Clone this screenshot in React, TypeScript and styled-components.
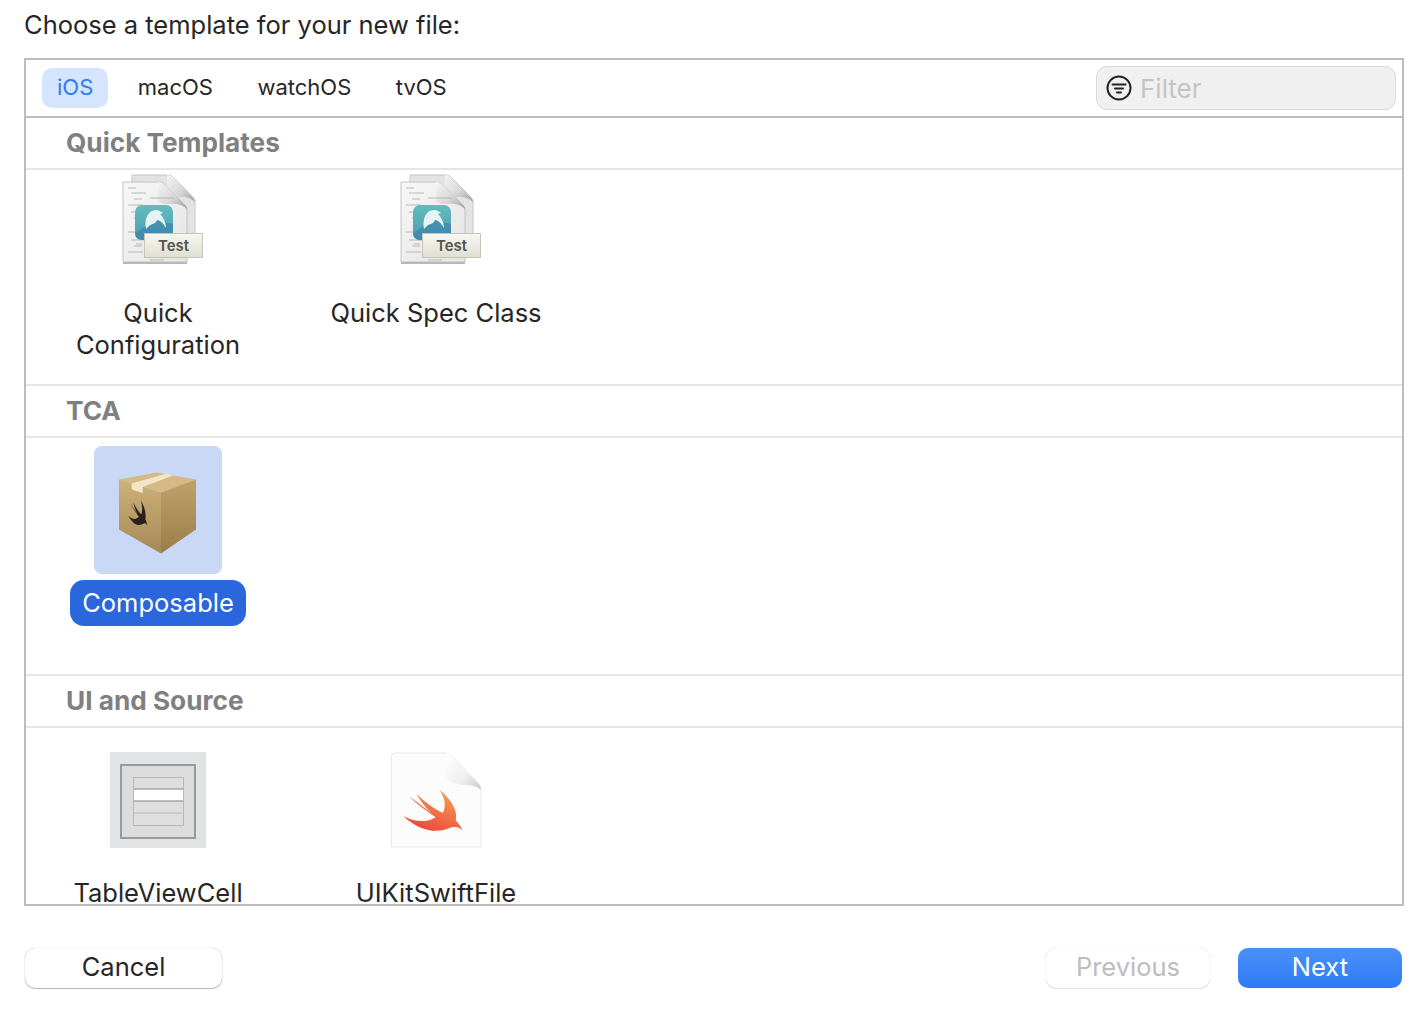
import React from "react";
import styled, { createGlobalStyle } from "styled-components";

const GlobalStyle = createGlobalStyle`
  html, body {
    margin: 0;
    background: #fff;
    font-family: Inter, "Liberation Sans", sans-serif;
    color: #262626;
  }
  * { box-sizing: border-box; }
`;

const Page = styled.div`
  width: 1422px;
  height: 1010px;
  padding: 0 18px 0 24px;
  overflow: hidden;
`;

const Title = styled.div`
  height: 58px;
  padding-top: 8px;
  font-size: 25.5px;
  line-height: 34px;
`;

const Panel = styled.div`
  height: 848px;
  border: 2px solid #bcbcbc;
  overflow: hidden;
`;

const Toolbar = styled.div`
  height: 58px;
  border-bottom: 2px solid #bcbcbc;
  display: flex;
  align-items: flex-start;
  padding: 8px 6px 0 16px;
  gap: 14.5px;
`;

const Tab = styled.div<{ $active?: boolean }>`
  height: 40px;
  padding: 0 15px;
  border-radius: 10px;
  font-size: 22px;
  line-height: 39px;
  background: ${(p) => (p.$active ? "#d4e5fd" : "transparent")};
  color: ${(p) => (p.$active ? "#2e7bf6" : "#262626")};
`;

const Filter = styled.div`
  margin-left: auto;
  margin-top: -2px;
  width: 300px;
  height: 44px;
  border: 1.5px solid #d9d9d9;
  border-radius: 11px;
  background: #f0f0f0;
  display: flex;
  align-items: center;
  gap: 8px;
  padding-left: 9px;
  font-size: 26px;
  color: #c4c4c4;
`;

const SectionHeader = styled.div`
  height: 52px;
  border-bottom: 2px solid #e6e6e6;
  padding-left: 40px;
  font-size: 26.2px;
  font-weight: 700;
  line-height: 50px;
  color: #808080;
`;

const Row = styled.div<{ $height: number; $compact?: boolean }>`
  height: ${(p) => p.$height}px;
  border-bottom: 2px solid #e6e6e6;
  display: grid;
  grid-template-columns: 220px 220px;
  column-gap: 58px;
  align-items: start;
  padding: ${(p) => (p.$compact ? "0" : "8px")} 0 0 22px;
  &:last-child { border-bottom: none; }
`;

const Cell = styled.div`
  display: flex;
  flex-direction: column;
  align-items: center;
`;

const IconSlot = styled.div<{ $compact?: boolean; $selected?: boolean }>`
  width: 128px;
  height: ${(p) => (p.$compact ? 100 : 128)}px;
  display: flex;
  align-items: center;
  justify-content: center;
  border-radius: 8px;
  background: ${(p) => (p.$selected ? "#c9d8f5" : "transparent")};
`;

const Label = styled.div<{ $compact?: boolean; $selected?: boolean }>`
  margin-top: ${(p) => (p.$compact ? 20 : 6)}px;
  padding: 7px 12px;
  border-radius: 14px;
  font-size: 25.5px;
  line-height: 32px;
  text-align: center;
  white-space: nowrap;
  background: ${(p) => (p.$selected ? "#2a67dc" : "transparent")};
  color: ${(p) => (p.$selected ? "#fff" : "#262626")};
`;

const Footer = styled.div`
  margin-top: 42px;
  display: flex;
  padding: 0 2px 0 1px;
`;

const Button = styled.div<{ $width: number; $variant?: "primary" | "disabled" }>`
  width: ${(p) => p.$width}px;
  height: 40px;
  border-radius: 10px;
  font-size: 25.5px;
  line-height: 38px;
  text-align: center;
  background: ${(p) =>
    p.$variant === "primary"
      ? "linear-gradient(#4a90f8, #2f7bf6)"
      : "#fff"};
  color: ${(p) =>
    p.$variant === "primary"
      ? "#fff"
      : p.$variant === "disabled"
        ? "#bdbdbd"
        : "#262626"};
  box-shadow: ${(p) =>
    p.$variant === "primary"
      ? "0 0 1px rgba(0,0,0,.15)"
      : p.$variant === "disabled"
        ? "0 0 1px rgba(0,0,0,.25), 0 1px 1px rgba(0,0,0,.1)"
        : "0 0 1px rgba(0,0,0,.4), 0 1px 1px rgba(0,0,0,.25)"};
`;

const RightButtons = styled.div`
  margin-left: auto;
  display: flex;
  gap: 28px;
`;

const TestSvg = styled.svg`
  margin-left: 8px;
`;

const BoxSvg = styled.svg`
  margin-top: 5px;
`;

const SWIFT_PATH =
  "M180 137C215 165 235 200 228 228C238 238 246 250 248 258C235 245 222 246 205 252C165 268 115 255 72 215C105 232 140 236 168 218C140 200 110 178 88 155C115 175 140 195 155 205C135 188 120 165 110 148C135 172 165 195 190 205C200 185 195 160 180 137Z";

const FilterIcon = () => (
  <svg width="26" height="26" viewBox="0 0 26 26" fill="none" stroke="#222">
    <circle cx="13" cy="13" r="11.5" strokeWidth="2" />
    <path d="M6.5 9.5h13M9 13.5h8M11 17.5h4" strokeWidth="2" strokeLinecap="round" />
  </svg>
);

const CodeLines = ({ x, y }: { x: number; y: number }) => (
  <g stroke="#a2a2a2" strokeWidth="0.7">
    {[0, 5, 11, 17, 24, 30, 44, 52, 58, 64].map((dy, i) => (
      <path key={dy} d={`M${x + (i % 3) * 3} ${y + dy}h${8 + ((i * 7) % 14)}`} />
    ))}
  </g>
);

const TestIcon = ({ id }: { id: string }) => (
  <TestSvg width="84" height="92" viewBox="0 0 84 92">
    <defs>
      <linearGradient id={`${id}-teal`} x1="0" y1="0" x2="0" y2="1">
        <stop offset="0" stopColor="#62bcbd" />
        <stop offset="1" stopColor="#4b9db4" />
      </linearGradient>
      <linearGradient id={`${id}-fold`} x1="0" y1="0" x2="1" y2="1">
        <stop offset="0" stopColor="#f4f4f4" />
        <stop offset="0.55" stopColor="#d8d8d8" />
        <stop offset="1" stopColor="#9c9c9c" />
      </linearGradient>
      <linearGradient id={`${id}-page`} x1="0" y1="0" x2="1" y2="1">
        <stop offset="0" stopColor="#f7f7f7" />
        <stop offset="1" stopColor="#e4e4e4" />
      </linearGradient>
      <linearGradient id={`${id}-tag`} x1="0" y1="0" x2="0" y2="1">
        <stop offset="0" stopColor="#f8f8f3" />
        <stop offset="1" stopColor="#deded2" />
      </linearGradient>
    </defs>
    <path d="M12 1h36q3 0 5 2l20 20q2 2 2 5v53H12z" fill="#e3e3e3" stroke="#c6c6c6" />
    <path d="M47 1q3 0 6 2l20 21q2 2 2 4-6-6-18-5-10 1-10-6z" fill={`url(#${id}-fold)`} />
    <path d="M3 8h36q3 0 5 2l21 21q2 2 2 5v52H3z" fill={`url(#${id}-page)`} stroke="#c2c2c2" />
    <path d="M38 8q3 0 6 2l21 21q2 2 2 4-6-6-18-5-11 1-11-6z" fill={`url(#${id}-fold)`} />
    <path d="M3 88h64v2H3z" fill="#b8b8b8" />
    <CodeLines x={8} y={14} />
    <path d="M30 24h24M16 70h6M30 86h14" stroke="#a2a2a2" strokeWidth="0.7" />
    <rect x="15" y="31" width="38" height="35" rx="7" fill={`url(#${id}-teal)`} />
    <path d="M15 59l20-13 18 4v9q0 7-7 7H22q-7 0-7-7z" fill="#3a7fa8" opacity="0.6" />
    <path d="M26 55C24 45 28 36 36 36C39 36 42 38 43 39L40 40C43 43 46 48 46 54C43 49 40 46 37 46C36 50 31 50 29 52Z" fill="#e6f3f3" />
    <rect x="24.5" y="59.5" width="58" height="24" fill={`url(#${id}-tag)`} stroke="#c4c4b8" />
    <text x="53.5" y="77" textAnchor="middle" fontFamily="Inter, sans-serif" fontSize="15" fontWeight="600" fill="#55554f">
      Test
    </text>
  </TestSvg>
);

const BoxIcon = () => (
  <BoxSvg width="78" height="82" viewBox="0 0 78 82">
    <defs>
      <linearGradient id="box-left" x1="0" y1="0" x2="0" y2="1">
        <stop offset="0" stopColor="#cdb07a" />
        <stop offset="1" stopColor="#a68a55" />
      </linearGradient>
      <linearGradient id="box-right" x1="0" y1="0" x2="0" y2="1">
        <stop offset="0" stopColor="#bfa26a" />
        <stop offset="1" stopColor="#9a7e4b" />
      </linearGradient>
    </defs>
    <path d="M0 7.5L38 0.5L77 7.5L42 20.5z" fill="#d4b985" />
    <path d="M0 7.5L42 20.5V81.5L0 57.5z" fill="url(#box-left)" />
    <path d="M42 20.5L77 7.5V57.5L42 81.5z" fill="url(#box-right)" />
    <path d="M12.7 11.5L47.7 1.5L54 3.5L23.7 15V21L12.7 17.5z" fill="#f3e6c6" />
    <g transform="matrix(0.11 0.0073 -0.0097 0.202 3.47 -0.46)">
      <path d={SWIFT_PATH} fill="#26221c" />
    </g>
  </BoxSvg>
);

const CellTableIcon = () => (
  <svg width="96" height="96" viewBox="0 0 96 96">
    <rect width="96" height="96" fill="#e2e3e4" />
    <rect x="11" y="13" width="74" height="73" fill="#dcdcdc" stroke="#9a9a9a" strokeWidth="2" />
    <rect x="23.5" y="25.5" width="50" height="48" fill="#dedede" stroke="#b8b8b8" />
    <rect x="24" y="37" width="49" height="12" fill="#fff" />
    <path d="M24 37h49M24 49h49" stroke="#a6a6a6" strokeWidth="1.5" />
    <path d="M24 61h49" stroke="#b8b8b8" />
  </svg>
);

const SwiftFileIcon = () => (
  <svg width="92" height="96" viewBox="0 0 92 96">
    <defs>
      <linearGradient id="fold" x1="0" y1="0" x2="1" y2="1">
        <stop offset="0" stopColor="#fff" />
        <stop offset="0.6" stopColor="#f0f0f0" />
        <stop offset="1" stopColor="#c8c8c8" />
      </linearGradient>
      <linearGradient id="swift-grad" gradientUnits="userSpaceOnUse" x1="200" y1="137" x2="150" y2="260">
        <stop offset="0" stopColor="#f6a054" />
        <stop offset="1" stopColor="#ee4b3a" />
      </linearGradient>
    </defs>
    <path d="M5 1h50q4 0 7 3l26 27q3 3 3 7v57H1.5V4q0-3 3.5-3z" fill="#fcfcfc" stroke="#e8e8e8" />
    <path d="M55 1q4 0 7 3l26 27q3 3 3 7-5-5-16-5-20 0-20-16z" fill="url(#fold)" />
    <g transform="translate(13.5 38) scale(0.335) translate(-72 -137)">
      <path d={SWIFT_PATH} fill="url(#swift-grad)" />
    </g>
  </svg>
);

export default function App() {
  return (
    <Page>
      <GlobalStyle />
      <Title>Choose a template for your new file:</Title>
      <Panel>
        <Toolbar>
          <Tab $active>iOS</Tab>
          <Tab>macOS</Tab>
          <Tab>watchOS</Tab>
          <Tab>tvOS</Tab>
          <Filter>
            <FilterIcon />
            Filter
          </Filter>
        </Toolbar>

        <SectionHeader>Quick Templates</SectionHeader>
        <Row $height={216} $compact>
          <Cell>
            <IconSlot $compact><TestIcon id="a" /></IconSlot>
            <Label $compact>Quick<br />Configuration</Label>
          </Cell>
          <Cell>
            <IconSlot $compact><TestIcon id="b" /></IconSlot>
            <Label $compact>Quick Spec Class</Label>
          </Cell>
        </Row>

        <SectionHeader>TCA</SectionHeader>
        <Row $height={238}>
          <Cell>
            <IconSlot $selected><BoxIcon /></IconSlot>
            <Label $selected>Composable</Label>
          </Cell>
        </Row>

        <SectionHeader>UI and Source</SectionHeader>
        <Row $height={178}>
          <Cell>
            <IconSlot><CellTableIcon /></IconSlot>
            <Label>TableViewCell</Label>
          </Cell>
          <Cell>
            <IconSlot><SwiftFileIcon /></IconSlot>
            <Label>UIKitSwiftFile</Label>
          </Cell>
        </Row>
      </Panel>
      <Footer>
        <Button $width={197}>Cancel</Button>
        <RightButtons>
          <Button $width={164} $variant="disabled">Previous</Button>
          <Button $width={164} $variant="primary">Next</Button>
        </RightButtons>
      </Footer>
    </Page>
  );
}
